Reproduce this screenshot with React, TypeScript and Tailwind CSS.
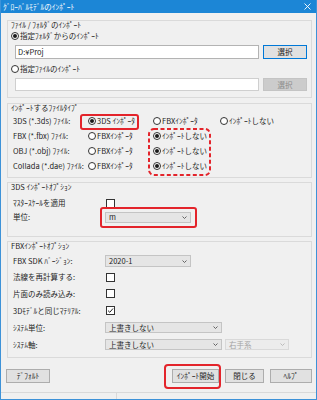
import React from "react";

function Radio({ checked }: { checked?: boolean }) {
  return (
    <span className="w-[8px] h-[8px] rounded-full border border-[#333333] bg-white flex items-center justify-center shrink-0">
      {checked && <span className="w-[4px] h-[4px] rounded-full bg-[#1a1a1a]" />}
    </span>
  );
}

function Check({ checked }: { checked?: boolean }) {
  return (
    <span className="ml-[1px] w-[9px] h-[9px] border border-[#333333] bg-white flex items-center justify-center shrink-0">
      {checked && (
        <svg width="7" height="7" viewBox="0 0 7 7">
          <path d="M1 3.6 L2.8 5.3 L6 1.5" stroke="#222" strokeWidth="1" fill="none" />
        </svg>
      )}
    </span>
  );
}

function Chevron({ color = "#555" }: { color?: string }) {
  return (
    <svg width="5" height="3" viewBox="0 0 5 3" className="shrink-0">
      <polyline points="0.5,0.5 2.5,2.5 4.5,0.5" stroke={color} strokeWidth="0.9" fill="none" />
    </svg>
  );
}

function Sel({ className, text, disabled }: { className: string; text: string; disabled?: boolean }) {
  return (
    <div
      className={
        "h-[11px] border flex items-center justify-between pl-[3px] pr-[3px] " +
        (disabled ? "border-[#d9d9d9] bg-[#ececec] text-[#a3a3a3] " : "border-[#c4c4c4] bg-[#e5e5e5] ") +
        className
      }
    >
      <span>{text}</span>
      <Chevron color={disabled ? "#b5b5b5" : "#555"} />
    </div>
  );
}

function Btn({ className, text, disabled, primary }: { className: string; text: string; disabled?: boolean; primary?: boolean }) {
  return (
    <div
      className={
        "h-full border flex items-center justify-center " +
        (disabled
          ? "border-[#c4c4c4] bg-[#cccccc] text-[#8c8c8c] "
          : primary
          ? "border-[#0078d7] bg-[#e1e1e1] "
          : "border-[#adadad] bg-[#e1e1e1] ") +
        className
      }
    >
      {text}
    </div>
  );
}

function Caption({ text }: { text: string }) {
  return <div className="h-[7px] leading-[7px] pl-[3px] flex items-center">{text}</div>;
}

function TypeRow({ label, sel }: { label: string; sel: 0 | 1 | 2 }) {
  return (
    <div className="h-[15px] flex items-center pl-[5px]">
      <div className="w-[75px]">{label}</div>
      <div className="w-[65px] flex items-center gap-[1px]">
        <Radio checked={sel === 0} />
        <span>{label.startsWith("3DS") ? "3DS ｲﾝﾎﾟｰﾀ" : "FBXｲﾝﾎﾟｰﾀ"}</span>
      </div>
      <div className="w-[67px] flex items-center gap-[1px]">
        <Radio checked={sel === 1} />
        <span>{label.startsWith("3DS") ? "FBXｲﾝﾎﾟｰﾀ" : "ｲﾝﾎﾟｰﾄしない"}</span>
      </div>
      {label.startsWith("3DS") && (
        <div className="flex items-center gap-[1px]">
          <Radio checked={sel === 2} />
          <span>ｲﾝﾎﾟｰﾄしない</span>
        </div>
      )}
    </div>
  );
}

export default function App() {
  return (
    <div className="relative w-[317px] h-[400px] bg-[#f0f0f0] border-x border-b border-[#3d92d8] flex flex-col font-['Noto_Sans_CJK_JP','Noto_Sans',sans-serif] text-[7.5px] leading-none text-[#1e1e1e] overflow-hidden">
      {/* title bar */}
      <div className="h-[13px] shrink-0 bg-[#1c86d6] flex items-center justify-between pl-[2px] pr-[5px] text-white">
        <span>ｸﾞﾛｰﾊﾞﾙﾓﾃﾞﾙのｲﾝﾎﾟｰﾄ</span>
        <svg width="7" height="7" viewBox="0 0 7 7">
          <path d="M0.5 0.5 L6.5 6.5 M6.5 0.5 L0.5 6.5" stroke="white" strokeWidth="0.9" />
        </svg>
      </div>

      {/* group 1 */}
      <div className="mt-[7px] ml-[6px] mr-[4px] h-[78px] shrink-0 border border-[#dadada] flex flex-col">
        <Caption text="ﾌｧｲﾙ / ﾌｫﾙﾀﾞのｲﾝﾎﾟｰﾄ" />
        <div className="h-[16px] flex items-center pl-[3px] gap-[1px]">
          <Radio checked />
          <span>指定ﾌｫﾙﾀﾞからのｲﾝﾎﾟｰﾄ</span>
        </div>
        <div className="mt-[1px] h-[14px] flex pl-[7px] pr-[4px] gap-[4px]">
          <div className="w-[244px] h-full bg-white border border-[#b3b3b3] flex items-center pl-[2px]">D:¥Proj</div>
          <Btn className="w-[44px]" text="選択" primary />
        </div>
        <div className="h-[19px] flex items-center pl-[3px] gap-[1px]">
          <Radio />
          <span>指定ﾌｧｲﾙのｲﾝﾎﾟｰﾄ</span>
        </div>
        <div className="h-[13px] flex pl-[7px] pr-[4px] gap-[4px]">
          <div className="w-[244px] h-full bg-white border border-[#cfcfcf]" />
          <Btn className="w-[44px]" text="選択" disabled />
        </div>
      </div>

      {/* group 2 */}
      <div className="mt-[5px] ml-[6px] mr-[4px] h-[75px] shrink-0 border border-[#dadada] flex flex-col">
        <Caption text="ｲﾝﾎﾟｰﾄするﾌｧｲﾙﾀｲﾌﾟ" />
        <div className="mt-[2px] flex flex-col">
          <TypeRow label="3DS (*.3ds) ﾌｧｲﾙ:" sel={0} />
          <TypeRow label="FBX (*.fbx) ﾌｧｲﾙ:" sel={1} />
          <TypeRow label="OBJ (*.obj) ﾌｧｲﾙ:" sel={1} />
          <TypeRow label="Collada (*.dae) ﾌｧｲﾙ:" sel={1} />
        </div>
      </div>

      {/* group 3 */}
      <div className="mt-[4px] ml-[6px] mr-[4px] h-[55px] shrink-0 border border-[#dadada] flex flex-col">
        <Caption text="3DS ｲﾝﾎﾟｰﾄｵﾌﾟｼｮﾝ" />
        <div className="mt-[5px] h-[16px] flex items-center pl-[5px]">
          <div className="w-[92px]">ﾏｽﾀｰｽｹｰﾙを適用</div>
          <Check />
        </div>
        <div className="h-[12px] flex items-center pl-[5px]">
          <div className="w-[92px]">単位:</div>
          <Sel className="w-[86px]" text="m" />
        </div>
      </div>

      {/* group 4 */}
      <div className="mt-[4px] ml-[6px] mr-[4px] h-[117px] shrink-0 border border-[#dadada] flex flex-col">
        <Caption text="FBXｲﾝﾎﾟｰﾄｵﾌﾟｼｮﾝ" />
        <div className="mt-[4px] flex flex-col">
          <div className="h-[16px] flex items-center pl-[5px]">
            <div className="w-[92px]">FBX SDK ﾊﾞｰｼﾞｮﾝ:</div>
            <Sel className="w-[86px] h-[12px]" text="2020-1" />
          </div>
          <div className="h-[16px] flex items-center pl-[5px]">
            <div className="w-[92px]">法線を再計算する:</div>
            <Check />
          </div>
          <div className="h-[17px] flex items-center pl-[5px]">
            <div className="w-[92px]">片面のみ読み込み:</div>
            <Check />
          </div>
          <div className="h-[17px] flex items-center pl-[5px]">
            <div className="w-[92px]">3Dﾓﾃﾞﾙと同じﾏﾃﾘｱﾙ:</div>
            <Check checked />
          </div>
          <div className="h-[17px] flex items-center pl-[5px]">
            <div className="w-[92px]">ｼｽﾃﾑ単位:</div>
            <Sel className="w-[117px]" text="上書きしない" />
          </div>
          <div className="h-[17px] flex items-center pl-[5px] gap-[3px]">
            <div className="w-[89px]">ｼｽﾃﾑ軸:</div>
            <Sel className="w-[117px]" text="上書きしない" />
            <Sel className="w-[64px]" text="右手系" disabled />
          </div>
        </div>
      </div>

      {/* buttons */}
      <div className="mt-[11px] h-[14px] shrink-0 flex justify-between pl-[5px] pr-[4px]">
        <Btn className="w-[44px]" text="ﾃﾞﾌｫﾙﾄ" />
        <div className="h-full flex gap-[6px]">
          <Btn className="w-[47px]" text="ｲﾝﾎﾟｰﾄ開始" />
          <Btn className="w-[39px]" text="閉じる" />
          <Btn className="w-[42px]" text="ﾍﾙﾌﾟ" />
        </div>
      </div>

      {/* status strip */}
      <div className="mt-[9px] flex-1 border-t border-[#d9d9d9] flex">
        <div className="w-[116px] border-r border-[#d9d9d9]" />
      </div>

      {/* red annotations */}
      <div className="absolute left-[79px] top-[114px] w-[59px] h-[16px] border-2 border-[#e3242b] rounded-[3px]" />
      <svg className="absolute left-[147px] top-[128px]" width="63" height="48" viewBox="0 0 63 48">
        <rect x="1" y="1" width="61" height="46" rx="5" fill="none" stroke="#e3242b" strokeWidth="2" strokeDasharray="4 2.5" />
      </svg>
      <div className="absolute left-[99px] top-[207px] w-[97px] h-[21px] border-2 border-[#e3242b] rounded-[3px]" />
      <div className="absolute left-[163px] top-[364px] w-[57px] h-[25px] border-2 border-[#e3242b] rounded-[4px]" />
    </div>
  );
}
